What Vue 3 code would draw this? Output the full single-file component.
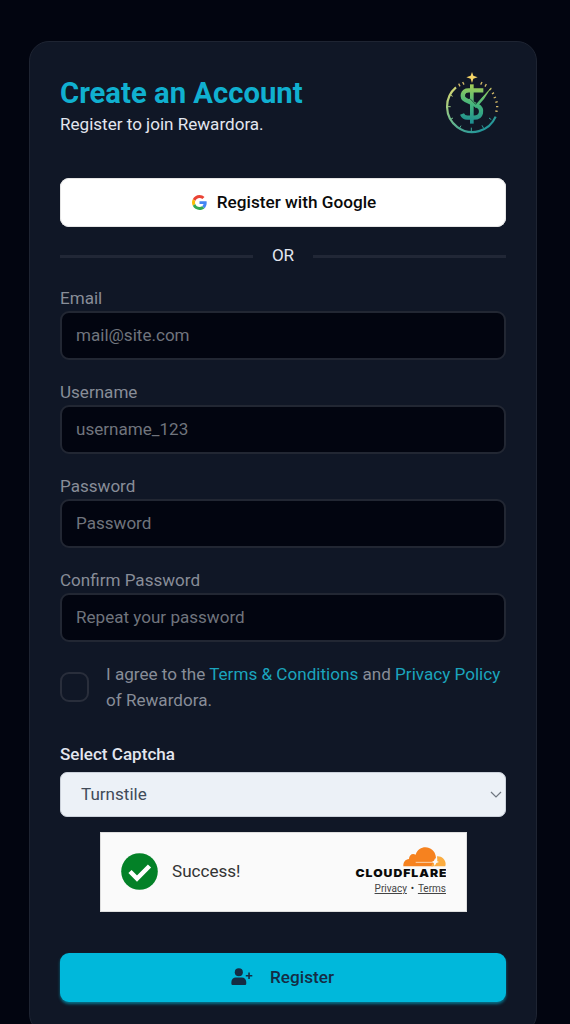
<script setup>
import { ref } from 'vue'

const fields = [
    { id: 'email', label: 'Email', type: 'email', placeholder: 'mail@site.com' },
    { id: 'username', label: 'Username', type: 'text', placeholder: 'username_123' },
    { id: 'password', label: 'Password', type: 'password', placeholder: 'Password' },
    { id: 'confirm', label: 'Confirm Password', type: 'password', placeholder: 'Repeat your password' }
]

const form = ref({ email: '', username: '', password: '', confirm: '' })
const agree = ref(false)
</script>

<template>
    <div class="page">
        <form class="card" @submit.prevent>
            <header class="header">
                <div>
                    <h1>Create an Account</h1>
                    <p>Register to join Rewardora.</p>
                </div>
                <svg class="logo" viewBox="0 0 180 192" fill="none">
                    <defs>
                        <linearGradient id="ring" x1="20" y1="30" x2="120" y2="180" gradientUnits="userSpaceOnUse">
                            <stop offset="0" stop-color="#f3df6a" />
                            <stop offset="0.5" stop-color="#7cc08a" />
                            <stop offset="1" stop-color="#23969a" />
                        </linearGradient>
                        <linearGradient id="dollar" x1="100" y1="40" x2="85" y2="160" gradientUnits="userSpaceOnUse">
                            <stop offset="0" stop-color="#a5cd55" />
                            <stop offset="0.5" stop-color="#45b67c" />
                            <stop offset="1" stop-color="#1a8a92" />
                        </linearGradient>
                    </defs>
                    <path d="M42 49 A76 76 0 1 0 161 137" stroke="url(#ring)" stroke-width="6.500" />
                    <path d="M15 107h11M25 145l8-4M52 172l5-8M88 182v-12M125 172l-5-9M148 146l-7-5M25 72l7 4" stroke="url(#ring)" stroke-width="3" />
                    <path d="M50 38l4 8M62 33l4 8M120 33l-4 8M133 39l-4 8M148 52l-6 6M156 65l-6 4M162 78l-7 3M167 92l-7 2M169 107h-7M167 121l-7-1" stroke="#d3b968" stroke-width="4" />
                    <path d="M90 3l4 11 13 5-13 4-4 13-4-13-13-4 13-5z" fill="#f6d568" />
                    <path d="M84 40h11v118H84z" fill="url(#dollar)" />
                    <path d="M124 58H80c-20 0-23 22-9 29l35 17c18 10 14 36-10 36H76c-9 0-13-4-16-11" stroke="url(#dollar)" stroke-width="13" />
                    <path d="M149 48l-47 50-17-17-6 6 23 25 24-28z" fill="url(#dollar)" />
                    <path d="M128 68l-27 32-17-17" stroke="#111827" stroke-width="2" />
                </svg>
            </header>

            <button type="button" class="btn google">
                <svg viewBox="0 0 48 48">
                    <path fill="#ea4335" d="M24 9.500c3.540 0 6.710 1.220 9.210 3.600l6.850-6.850C35.900 2.380 30.470 0 24 0 14.620 0 6.510 5.380 2.560 13.220l7.980 6.190C12.430 13.720 17.740 9.500 24 9.500z" />
                    <path fill="#4285f4" d="M46.980 24.550c0-1.570-.15-3.090-.38-4.550H24v9.020h12.940c-.58 2.960-2.260 5.480-4.780 7.180l7.730 6c4.510-4.180 7.090-10.360 7.090-17.650z" />
                    <path fill="#fbbc05" d="M10.530 28.590A14.500 14.500 0 0 1 9.770 24c0-1.600.27-3.140.76-4.590l-7.980-6.190A23.900 23.900 0 0 0 0 24c0 3.880.92 7.540 2.560 10.780z" />
                    <path fill="#34a853" d="M24 48c6.480 0 11.930-2.130 15.890-5.810l-7.730-6c-2.150 1.450-4.920 2.300-8.160 2.300-6.260 0-11.570-4.220-13.470-9.910l-7.980 6.190C6.510 42.620 14.620 48 24 48z" />
                </svg>
                <span>Register with Google</span>
            </button>

            <div class="divider"><span>OR</span></div>

            <div v-for="field in fields" :key="field.id" class="field">
                <label :for="field.id">{{ field.label }}</label>
                <input :id="field.id" v-model="form[field.id]" :type="field.type" :placeholder="field.placeholder">
            </div>

            <div class="agree">
                <input v-model="agree" type="checkbox" aria-label="Agree">
                <p>I agree to the <a href="#">Terms &amp; Conditions</a> and <a href="#">Privacy Policy</a><br>of Rewardora.</p>
            </div>

            <div class="captcha-label">Select Captcha</div>
            <div class="select">
                <span>Turnstile</span>
                <svg viewBox="0 0 12 7" fill="none"><path d="M1 1l5 5 5-5" stroke="#6f7780" stroke-width="1.200" /></svg>
            </div>

            <div class="turnstile">
                <svg class="check" viewBox="0 0 37 37">
                    <circle cx="18.500" cy="18.500" r="18.300" fill="#038127" />
                    <path d="M9 18.500l7 7L28.500 13" fill="none" stroke="#fff" stroke-width="4.500" />
                </svg>
                <span class="success">Success!</span>
                <div class="brand">
                    <svg class="cloud" viewBox="0 0 129 60">
                        <path fill="#f6821f" d="M1 58c-1-13 6-21 17-22 0-12 10-19 20-13C43 8 55 1 67 1c16 0 28 11 31 25 2 8 0 16-3 20l-5 12z" />
                        <path fill="#fbad41" d="M102 28c14-1 26 10 26 23l-1 7H84l5-9c8 2 13-2 14-9z" />
                        <path d="M38 46h50" fill="none" stroke="#fde3c8" stroke-width="2.500" />
                        <path d="M97 32l3 9 8 4-8 3-5 9-3-9-6-3 7-4z" fill="#fafafa" />
                    </svg>
                    <svg class="wordmark" viewBox="0 0 91 11">
                        <text transform="translate(0.500 9.200) scale(1.110 1)" textLength="82" lengthAdjust="spacing">CLOUDFLARE</text>
                    </svg>
                    <div class="links"><a href="#">Privacy</a><i>•</i><a href="#">Terms</a></div>
                </div>
            </div>

            <button type="submit" class="btn register">
                <svg viewBox="0 0 640 512" fill="currentColor">
                    <circle cx="224" cy="128" r="122" />
                    <path d="M134 288h180c74 0 134 60 134 134v42c0 27-21 48-48 48H48c-27 0-48-21-48-48v-42c0-74 60-134 134-134z" />
                    <path d="M508 136h48v72h74v48h-74v76h-48v-76h-74v-48h74z" />
                </svg>
                <span>Register</span>
            </button>
        </form>
    </div>
</template>

<style>
body {
    margin: 0;
    overflow: hidden;
    background: #020510;
}
</style>

<style scoped>
* {
    box-sizing: border-box;
}

.page {
    height: 1024px;
    padding: 41px 33px 0 29px;
    overflow: hidden;
    background: #020510;
    font-family: Roboto, sans-serif;
    font-size: 17.07px;
    color: #e3e6ef;
}

.card {
    height: 993px;
    padding: 29px 30px 0;
    border: 1px solid #1e2432;
    border-radius: 20px;
    background: #101726;
}

.header {
    display: flex;
    justify-content: space-between;
    height: 107px;
    padding-right: 4px;
}

h1 {
    margin: 4px 0 0;
    font-size: 29.25px;
    line-height: 36px;
    font-weight: 700;
    color: #10b0d0;
}

p {
    margin: 0;
}

.header p {
    line-height: 26px;
}

.logo {
    width: 60px;
    height: 64px;
}

.btn {
    display: flex;
    align-items: center;
    justify-content: center;
    width: 100%;
    height: 49px;
    padding: 0 0 2px;
    border: none;
    border-radius: 9px;
    font: 500 17.2px Roboto, sans-serif;
}

.google {
    gap: 10px;
    padding-left: 2px;
    background: #fff;
    color: #0a0a0a;
    box-shadow: inset 0 0 0 1px #e5e5e5;
}

.google svg {
    width: 15px;
    height: 15px;
    margin-top: 2px;
}

.divider {
    display: flex;
    align-items: center;
    gap: 19px;
    height: 58px;
    line-height: 18px;
}

.divider span {
    padding-bottom: 2px;
}

.divider::before,
.divider::after {
    content: "";
    flex: 1;
    height: 3px;
    background: #212736;
}

.field {
    height: 94px;
}

.field label {
    display: block;
    height: 26px;
    line-height: 26px;
    color: #888d98;
}

.field input {
    display: block;
    width: 100%;
    height: 49px;
    padding: 0 14px 2px;
    border: 2px solid #222733;
    border-radius: 9px;
    outline: none;
    background: #020510;
    font: 17.07px Roboto, sans-serif;
    color: #e3e6ef;
}

.field input::placeholder {
    color: #70747d;
    opacity: 1;
}

.agree {
    display: flex;
    align-items: center;
    gap: 17px;
    height: 52px;
    line-height: 26px;
    color: #888d98;
    white-space: nowrap;
}

.agree p {
    font-size: 17.1px;
}

.agree input {
    appearance: none;
    flex: none;
    width: 29px;
    height: 30px;
    margin: 0;
    border: 2px solid #292e3b;
    border-radius: 9px;
}

.agree a {
    color: #1ba4bd;
    text-decoration: none;
}

.captcha-label {
    height: 59px;
    padding-top: 28px;
    line-height: 26px;
    font-weight: 500;
}

.select {
    display: flex;
    align-items: center;
    justify-content: space-between;
    height: 45px;
    padding: 0 3px 1px 20px;
    border: 1px solid #cbd1da;
    border-radius: 7px;
    background: #ecf1f7;
    color: #414b59;
}

.select svg {
    width: 12px;
    height: 7px;
}

.turnstile {
    display: flex;
    align-items: center;
    width: 367px;
    height: 80px;
    margin: 15px 0 41px 40px;
    padding: 0 20px 1px;
    border: 1px solid #dedede;
    background: #fafafa;
    color: #333;
}

.check {
    width: 37px;
    height: 37px;
}

.success {
    margin-left: 14px;
    padding-bottom: 1px;
}

.brand {
    display: flex;
    flex-direction: column;
    align-items: flex-end;
    margin-left: auto;
}

.cloud {
    width: 43px;
    height: 20px;
}

.wordmark {
    width: 91px;
    height: 11px;
    margin-top: 1px;
}

.wordmark text {
    font: 900 11px Inter, sans-serif;
    fill: #0a0a0a;
}

.links {
    display: flex;
    align-items: center;
    margin-top: 3px;
    font-size: 10px;
    line-height: 14px;
}

.links a {
    color: #444;
}

.links i {
    width: 11px;
    font-size: 10px;
    font-style: normal;
    text-align: center;
}

.register {
    gap: 17px;
    padding-right: 1px;
    background: #00b8db;
    color: #152c44;
    box-shadow: 0 2px 3px #08738b;
}

.register svg {
    width: 22px;
    height: 17px;
}
</style>
